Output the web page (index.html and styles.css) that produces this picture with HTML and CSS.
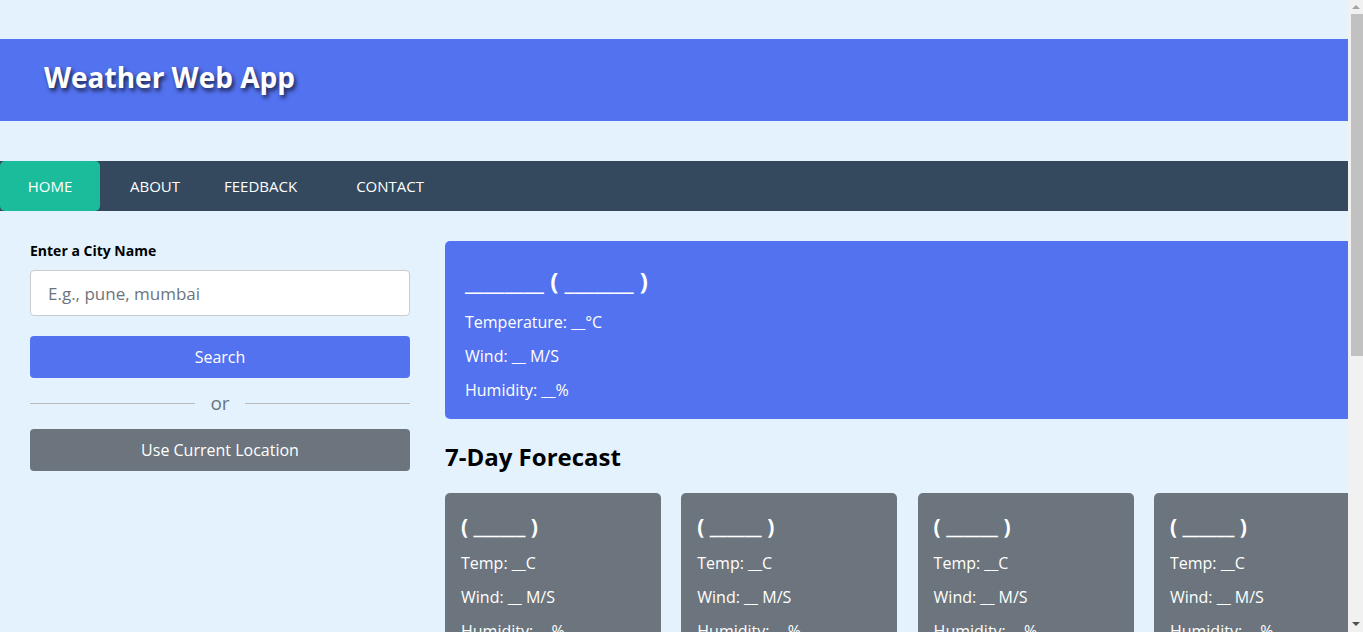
FILE: index.html
```html
<!DOCTYPE html>
<html lang="en">
<head>
<meta charset="utf-8">
<title>Weather Web App</title>
<link rel="stylesheet" href="styles.css">
</head>
<body>
<header class="app-header">
  <h1 class="app-title">Weather Web App</h1>
</header>
<nav class="navbar">
  <a class="nav-link active" href="#">HOME</a>
  <a class="nav-link about" href="#">ABOUT</a>
  <a class="nav-link feedback" href="#">FEEDBACK</a>
  <a class="nav-link contact" href="#">CONTACT</a>
</nav>
<main class="container">
  <section class="weather-input">
    <h3 class="input-label">Enter a City Name</h3>
    <input class="city-input" type="text" placeholder="E.g., pune, mumbai">
    <button class="btn search-btn">Search</button>
    <div class="separator"><span class="sep-line"></span><span class="sep-text">or</span><span class="sep-line"></span></div>
    <button class="btn location-btn">Use Current Location</button>
  </section>
  <section class="weather-data">
    <div class="current-weather">
      <h2 class="current-title">________ ( _______ )</h2>
      <p class="stat">Temperature: __°C</p>
      <p class="stat">Wind: __ M/S</p>
      <p class="stat">Humidity: __%</p>
    </div>
    <h2 class="forecast-title">7-Day Forecast</h2>
    <ul class="weather-cards">
      <li class="card"><h3 class="card-title">( ______ )</h3><p class="stat">Temp: __C</p><p class="stat">Wind: __ M/S</p><p class="stat">Humidity: __%</p></li>
      <li class="card"><h3 class="card-title">( ______ )</h3><p class="stat">Temp: __C</p><p class="stat">Wind: __ M/S</p><p class="stat">Humidity: __%</p></li>
      <li class="card"><h3 class="card-title">( ______ )</h3><p class="stat">Temp: __C</p><p class="stat">Wind: __ M/S</p><p class="stat">Humidity: __%</p></li>
      <li class="card"><h3 class="card-title">( ______ )</h3><p class="stat">Temp: __C</p><p class="stat">Wind: __ M/S</p><p class="stat">Humidity: __%</p></li>
      <li class="card"><h3 class="card-title">( ______ )</h3><p class="stat">Temp: __C</p><p class="stat">Wind: __ M/S</p><p class="stat">Humidity: __%</p></li>
      <li class="card"><h3 class="card-title">( ______ )</h3><p class="stat">Temp: __C</p><p class="stat">Wind: __ M/S</p><p class="stat">Humidity: __%</p></li>
      <li class="card"><h3 class="card-title">( ______ )</h3><p class="stat">Temp: __C</p><p class="stat">Wind: __ M/S</p><p class="stat">Humidity: __%</p></li>
    </ul>
  </section>
</main>
<div class="fake-scrollbar" aria-hidden="true">
  <span class="sb-arrow sb-up"></span>
  <span class="sb-thumb"></span>
  <span class="sb-arrow sb-down"></span>
</div>
</body>
</html>
```
FILE: styles.css
```css
* { box-sizing: border-box; }
html { overflow-x: hidden; }
body {
  margin: 0;
  padding-top: 39px;
  background: #e3f2fd;
  font-family: "Open Sans", "Noto Sans", sans-serif;
  overflow-x: hidden;
}
.app-header {
  background: #5372f0;
  height: 82px;
  display: flex;
  align-items: center;
  padding-left: 44px;
  padding-bottom: 7px;
}
.app-title {
  margin: 0;
  color: #fff;
  font-size: 28px;
  font-weight: 700;
  text-shadow: 2px 3px 4px rgba(0, 0, 0, 0.7);
}
.navbar {
  margin-top: 40px;
  height: 50px;
  background: #34495e;
  display: flex;
  align-items: stretch;
}
.nav-link {
  display: flex;
  align-items: center;
  color: #fff;
  text-decoration: none;
  font-size: 15px;
}
.nav-link.active {
  background: #1abc9c;
  width: 100px;
  justify-content: center;
  border-radius: 5px;
}
.nav-link.about { margin-left: 30px; }
.nav-link.feedback { margin-left: 44px; }
.nav-link.contact { margin-left: 59px; }
.container {
  display: flex;
  gap: 35px;
  padding: 30px 0 30px 30px;
}
.weather-input {
  width: 380px;
  flex-shrink: 0;
  display: flex;
  flex-direction: column;
}
.input-label {
  margin: 0;
  font-size: 14px;
  font-weight: 700;
  line-height: 20px;
  color: #000;
}
.city-input {
  margin-top: 9px;
  height: 46px;
  width: 100%;
  border: 1px solid #ccc;
  border-radius: 4px;
  background: #fff;
  padding: 0 17px;
  font-family: inherit;
  font-size: 17px;
  outline: none;
}
.city-input::placeholder { color: #6c757d; }
.btn {
  width: 100%;
  height: 42px;
  border: none;
  border-radius: 4px;
  color: #fff;
  font-family: inherit;
  font-size: 16px;
}
.search-btn { margin-top: 20px; background: #5372f0; }
.separator {
  display: flex;
  align-items: center;
  height: 51px;
}
.sep-line { flex: 1; height: 1px; background: #bbb; }
.sep-text { width: 50px; text-align: center; color: #6c757d; font-size: 19px; line-height: 1; }
.location-btn { background: #6c757d; }
.weather-data {
  width: 925px;
  flex-shrink: 0;
}
.current-weather {
  background: #5372f0;
  border-radius: 5px;
  padding: 25px 20px 17px;
  color: #fff;
  height: 178px;
}
.current-title {
  margin: 0 0 9px;
  font-size: 24px;
  font-weight: 700;
  line-height: 30px;
}
.stat {
  margin: 0;
  font-size: 16px;
  font-weight: 500;
  line-height: 34px;
}
.forecast-title {
  margin: 22px 0 20px;
  font-size: 24px;
  font-weight: 700;
  line-height: 32px;
  color: #000;
}
.weather-cards {
  list-style: none;
  margin: 0;
  padding: 0;
  display: grid;
  grid-template-columns: repeat(4, 216px);
  gap: 20px 20.3px;
}
.card {
  background: #6c757d;
  border-radius: 5px;
  padding: 19px 16px 20px;
  color: #fff;
}
.card-title {
  margin: 0 0 6px;
  font-size: 21px;
  font-weight: 700;
  line-height: 28px;
}
.fake-scrollbar {
  position: fixed;
  top: 0;
  right: 0;
  width: 15px;
  height: 100vh;
  background: #f1f1f1;
  display: flex;
  flex-direction: column;
  align-items: center;
}
.sb-arrow {
  width: 0;
  height: 0;
  border-left: 4px solid transparent;
  border-right: 4px solid transparent;
}
.sb-up {
  margin-top: 5px;
  border-bottom: 4px solid #a3a3a3;
}
.sb-thumb {
  margin-top: 5px;
  width: 12px;
  margin-left: 3px;
  height: 342px;
  background: #c1c1c1;
}
.sb-down {
  margin-top: auto;
  margin-bottom: 6px;
  border-top: 4px solid #505050;
}
```
